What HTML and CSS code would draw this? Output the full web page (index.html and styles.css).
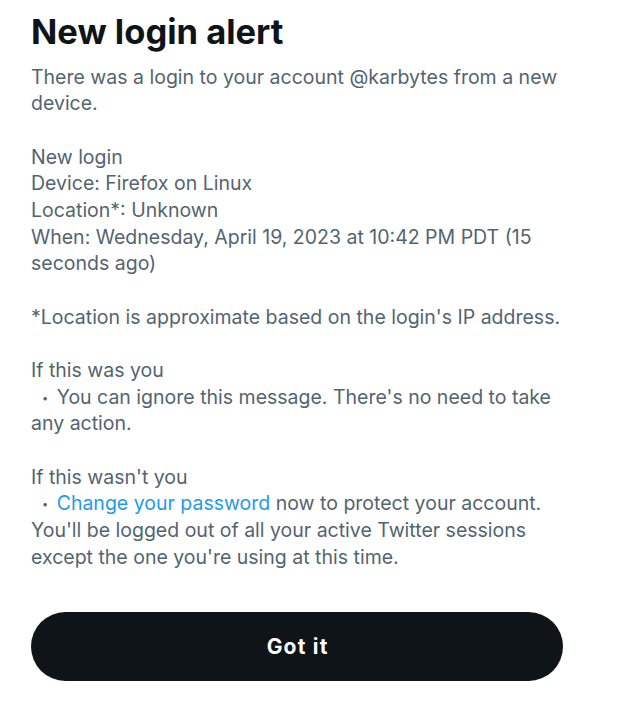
FILE: index.html
```html
<!DOCTYPE html>
<html>
<head>
<meta charset="utf-8">
<link rel="stylesheet" href="styles.css">
</head>
<body>
<div class="dialog">
  <h1 class="title">New login alert</h1>
  <div class="message">There was a login to your account @karbytes from a new device.

New login
Device: Firefox on Linux
Location*: Unknown
When: Wednesday, April 19, 2023 at 10:42 PM PDT (15 seconds ago)

*Location is approximate based on the login's IP address.

If this was you
  <span class="dot">•</span> You can ignore this message. There's no need to take any action.

If this wasn't you
  <span class="dot">•</span> <a class="link" href="#">Change your password</a> now to protect your account. You'll be logged out of all your active Twitter sessions except the one you're using at this time.</div>
  <button class="btn">Got it</button>
</div>
</body>
</html>
```

FILE: styles.css
```css
html, body {
  margin: 0;
  padding: 0;
  background: #ffffff;
}
body {
  font-family: Inter, Roboto, "Liberation Sans", sans-serif;
}
.dialog {
  width: 532px;
  padding: 13px 0 0 31px;
  display: flex;
  flex-direction: column;
}
.title {
  margin: 0;
  font-size: 34.5px;
  line-height: 37.33px;
  font-weight: 700;
  color: #0f1419;
}
.message {
  margin-top: 13.4px;
  font-size: 19.5px;
  line-height: 26.67px;
  color: #536471;
  white-space: pre-wrap;
}
.dot {
  font-size: 11px;
  line-height: 0;
  margin-right: 3px;
  vertical-align: 2px;
}
.link {
  color: #1d9bf0;
  text-decoration: none;
}
.btn {
  margin-top: 41.6px;
  height: 69.33px;
  border: none;
  border-radius: 35px;
  background: #0f1419;
  color: #ffffff;
  font-family: Inter, Roboto, "Liberation Sans", sans-serif;
  font-size: 21px;
  font-weight: 700;
  letter-spacing: 1.2px;
  text-indent: 1.2px;
  cursor: pointer;
}
```
